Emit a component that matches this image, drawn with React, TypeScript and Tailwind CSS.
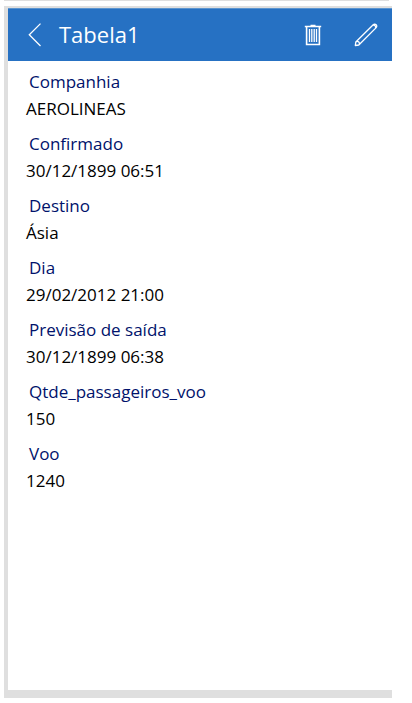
const record = [
  { label: 'Companhia', value: 'AEROLINEAS' },
  { label: 'Confirmado', value: '30/12/1899 06:51' },
  { label: 'Destino', value: 'Ásia' },
  { label: 'Dia', value: '29/02/2012 21:00' },
  { label: 'Previsão de saída', value: '30/12/1899 06:38' },
  { label: 'Qtde_passageiros_voo', value: '150' },
  { label: 'Voo', value: '1240' },
];

function BackIcon() {
  return (
    <svg width="14" height="24" viewBox="0 0 14 24" fill="none" stroke="currentColor" strokeWidth="1.3" aria-hidden="true">
      <path d="M12.5 0.6 1.3 11.8 12.5 23" />
    </svg>
  );
}

function TrashIcon() {
  return (
    <svg width="18" height="22" viewBox="0 0 18 22" fill="none" stroke="currentColor" strokeWidth="1.3" aria-hidden="true">
      <path d="M0.8 2.5H17.2M6.5 1.5H11.5M2.6 2.5V20.5H15.4V2.5" strokeWidth="1.6" />
      <path d="M5.5 5V18M7.8 5V18M10.2 5V18M12.5 5V18" />
    </svg>
  );
}

function PencilIcon() {
  return (
    <svg width="24" height="24" viewBox="0 0 24 24" fill="none" stroke="currentColor" strokeWidth="1.3" strokeLinejoin="round" aria-hidden="true">
      <path d="M1.3 22.5 1.8 19 19.2 1.7A2 2 0 0 1 22.2 4.6L4.8 22ZM1.8 19A2.1 2.1 0 0 1 4.8 22M18.3 2.6A2.1 2.1 0 0 1 21.3 5.5" />
    </svg>
  );
}

export default function App() {
  return (
    <div className="flex min-h-screen flex-col bg-white pr-5 pb-[5px] pl-1 font-['Open_Sans','Noto_Sans',sans-serif]">
      <div className="mr-[3px] mb-[5px] h-px bg-[#dfdfdf]" />
      <main className="flex grow flex-col border-t-2 border-b-8 border-l-4 border-[#dfdfdf] bg-white">
        <header className="flex h-[53px] items-center border-t border-[#5b94cf] bg-[#2671c3] pr-3.5 pl-5 text-white">
          <button type="button" aria-label="Voltar" className="mr-[17px]">
            <BackIcon />
          </button>
          <h1 className="grow pb-0.5 text-[22px] leading-8">Tabela1</h1>
          <button type="button" aria-label="Excluir" className="mr-8">
            <TrashIcon />
          </button>
          <button type="button" aria-label="Editar">
            <PencilIcon />
          </button>
        </header>
        <dl className="flex flex-col gap-2 pt-[7px] pl-[18px] text-[17px] leading-[27px]">
          {record.map((field) => (
            <div key={field.label}>
              <dt className="pl-[3px] text-[#00126b]">{field.label}</dt>
              <dd className="text-black">{field.value}</dd>
            </div>
          ))}
        </dl>
      </main>
    </div>
  );
}
